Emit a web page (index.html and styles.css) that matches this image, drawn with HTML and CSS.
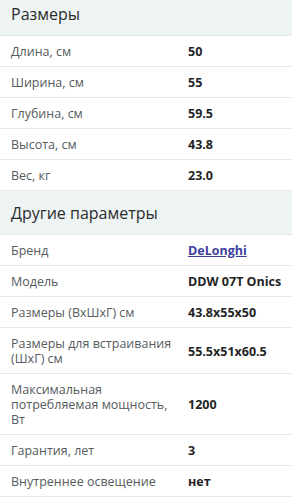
FILE: index.html
```html
<!DOCTYPE html>
<html lang="ru">
<head>
<meta charset="utf-8">
<title>Характеристики</title>
<link rel="stylesheet" href="styles.css">
</head>
<body>
<div class="specs">
  <section class="group">
    <h2 class="group-title">Размеры</h2>
    <div class="row"><div class="label">Длина, см</div><div class="value">50</div></div>
    <div class="row"><div class="label">Ширина, см</div><div class="value">55</div></div>
    <div class="row"><div class="label">Глубина, см</div><div class="value">59.5</div></div>
    <div class="row"><div class="label">Высота, см</div><div class="value">43.8</div></div>
    <div class="row"><div class="label">Вес, кг</div><div class="value">23.0</div></div>
  </section>
  <section class="group">
    <h2 class="group-title">Другие параметры</h2>
    <div class="row"><div class="label">Бренд</div><div class="value"><a class="brand-link" href="#">DeLonghi</a></div></div>
    <div class="row"><div class="label">Модель</div><div class="value">DDW 07T Onics</div></div>
    <div class="row"><div class="label">Размеры (ВхШхГ) см</div><div class="value">43.8x55x50</div></div>
    <div class="row"><div class="label">Размеры для встраивания (ШхГ) см</div><div class="value">55.5x51x60.5</div></div>
    <div class="row"><div class="label">Максимальная потребляемая мощность, Вт</div><div class="value">1200</div></div>
    <div class="row"><div class="label">Гарантия, лет</div><div class="value">3</div></div>
    <div class="row"><div class="label">Внутреннее освещение</div><div class="value">нет</div></div>
  </section>
</div>
</body>
</html>
```
FILE: styles.css
```css
html, body {
  margin: 0;
  padding: 0;
  background: #ffffff;
}

body {
  font-family: "Open Sans", "Noto Sans", sans-serif;
  color: #2a2a2a;
  overflow: hidden;
}

/* list is scrolled a little, so the first heading is cut at the top */
.specs {
  margin-top: -8px;
}

.group-title {
  margin: 0;
  padding: 0 11px;
  height: 44px;
  display: flex;
  align-items: center;
  background: #eef3f4;
  font-size: 16px;
  font-weight: 400;
  color: #2b2b2b;
  border-bottom: 1px solid #e3e8ea;
  box-sizing: border-box;
}

.row {
  display: grid;
  grid-template-columns: 166px 1fr;
  column-gap: 11px;
  align-items: center;
  padding: 8px 4px 7px 11px;
  border-bottom: 1px solid #e6e9eb;
  font-size: 12.5px;
  line-height: 15px;
}

.label {
  color: #555b5e;
}

.value {
  font-weight: 700;
  color: #242424;
  white-space: nowrap;
}

.brand-link {
  color: #3c3f9e;
  text-decoration: underline;
}
```
